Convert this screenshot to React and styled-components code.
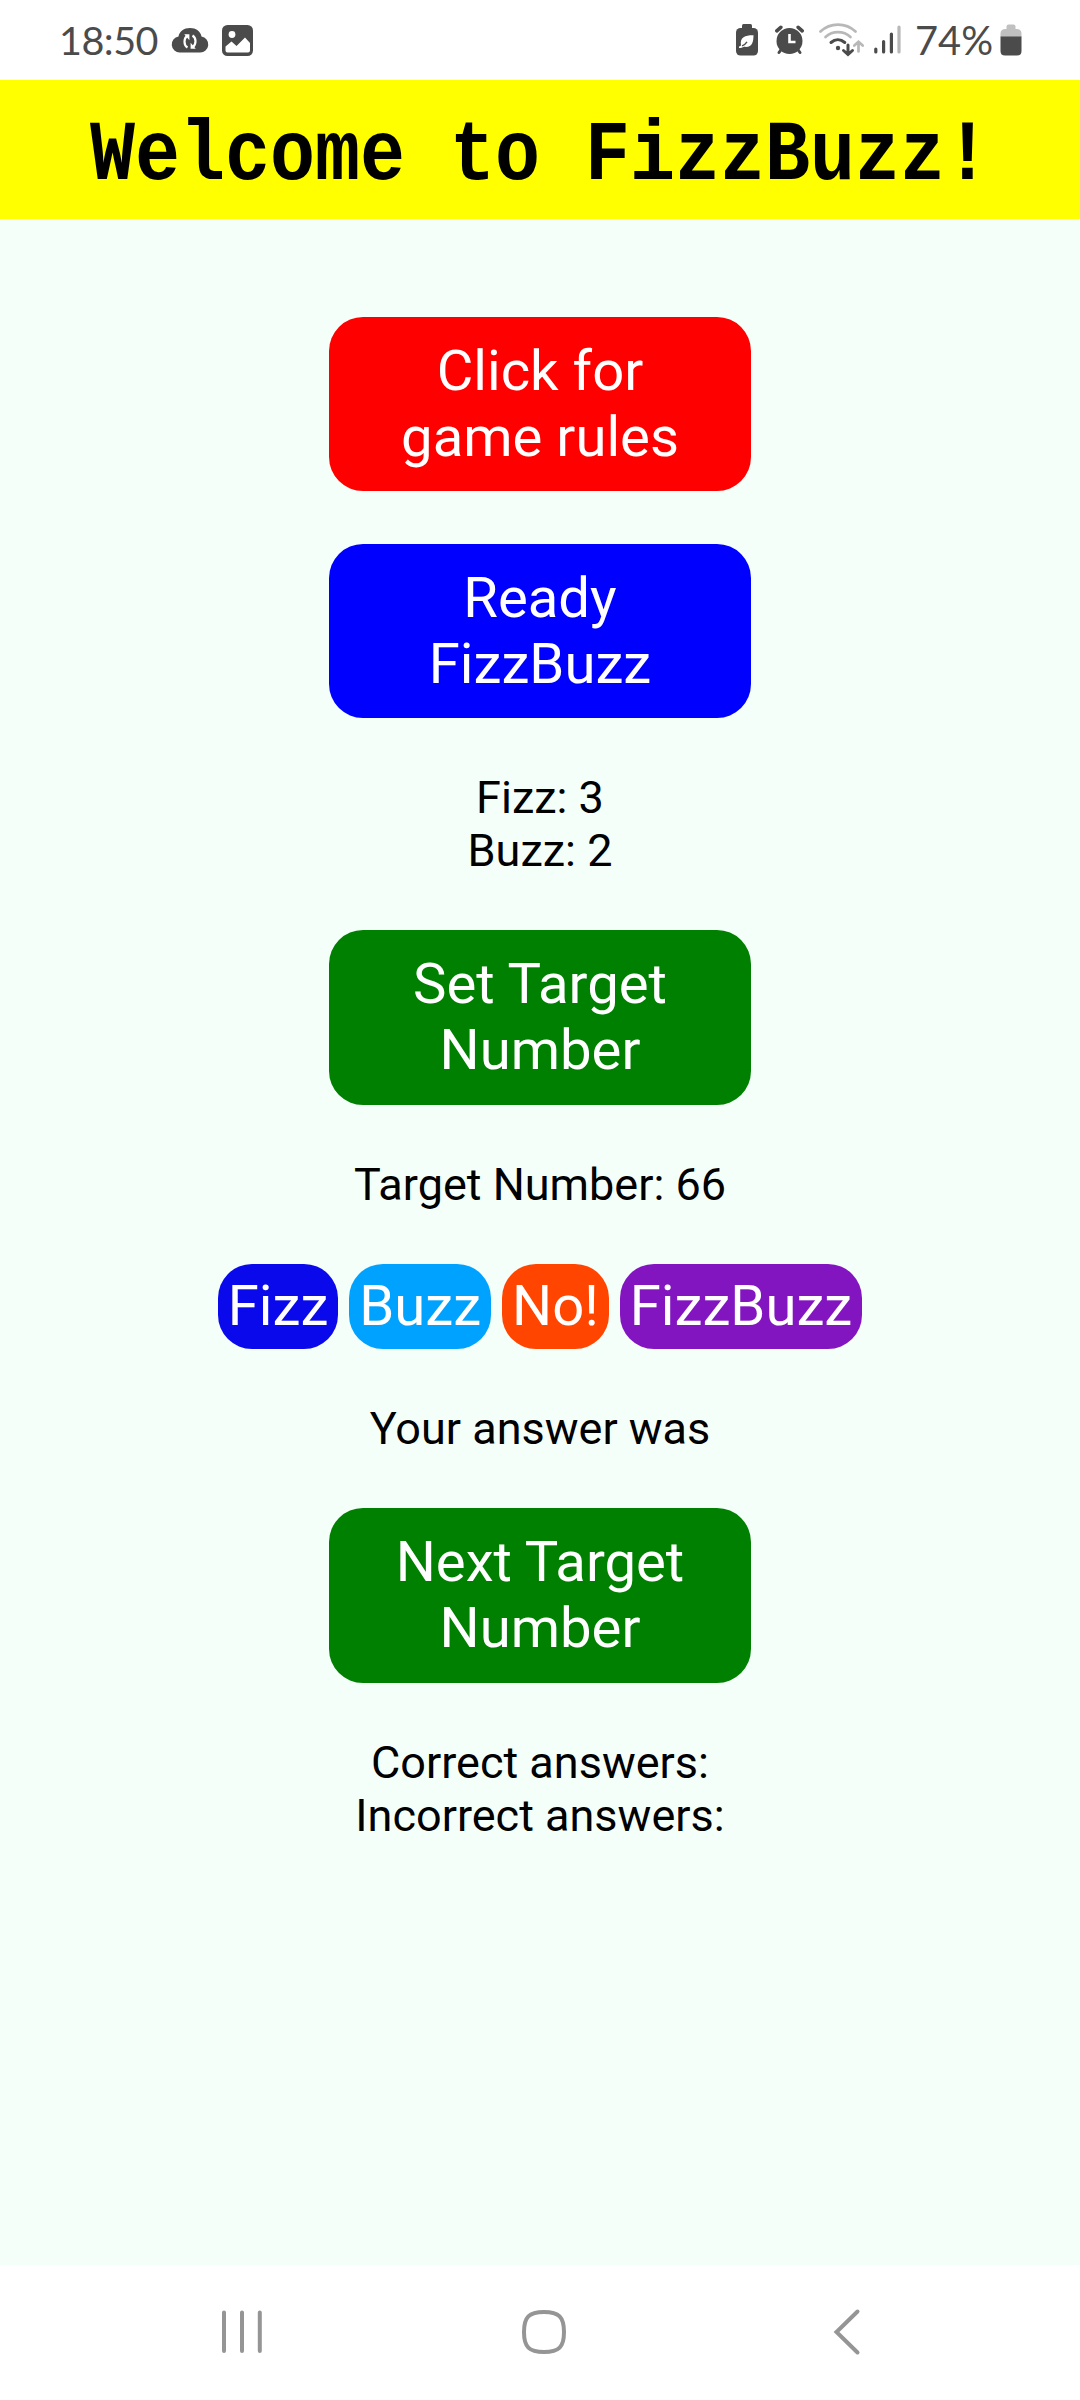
import React from "react";
import styled, { createGlobalStyle } from "styled-components";

const Global = createGlobalStyle`
  html, body { margin: 0; padding: 0; background: #fff; }
  * { box-sizing: border-box; }
`;

const Screen = styled.div`
  width: 1080px;
  height: 2400px;
  display: flex;
  flex-direction: column;
  overflow: hidden;
  font-family: Roboto, "Liberation Sans", sans-serif;
`;

const StatusBar = styled.header`
  height: 80px;
  flex: none;
  display: flex;
  justify-content: space-between;
  padding: 0 58px 0 59px;
  background: #fff;
`;

const StatusGroup = styled.div`
  display: flex;
  align-items: center;
`;

const StatusText = styled.span`
  font-family: Lato, sans-serif;
  font-size: ${(p) => p.$size}px;
  letter-spacing: ${(p) => p.$spacing || 0}px;
  line-height: 80px;
  width: ${(p) => p.$width}px;
  white-space: nowrap;
  color: #4b4b4b;
`;

const Icon = styled.svg`
  display: block;
  flex: none;
  width: ${(p) => p.$w}px;
  height: ${(p) => p.$h || 80}px;
`;

const Banner = styled.div`
  flex: none;
  height: 139px;
  background: #ff0;
  display: flex;
  align-items: center;
  justify-content: center;
`;

const Title = styled.h1`
  margin: 0;
  font-family: "Liberation Mono", monospace;
  font-weight: 700;
  font-size: 75px;
  line-height: 90px;
  white-space: pre;
  color: #000;
  transform: translateY(7px) scaleY(1.14);
`;

const Main = styled.main`
  flex: 1;
  background: #f5fffa;
  display: flex;
  flex-direction: column;
  align-items: center;
  gap: 53px;
  padding-top: 98px;
`;

const WideButton = styled.button`
  width: 422px;
  height: ${(p) => p.$h || 174}px;
  flex: none;
  border: 0;
  border-radius: 34px;
  padding: 0 56px;
  background: ${(p) => p.$bg};
  color: #fff;
  font: 400 56.25px/66px Roboto, sans-serif;
`;

const Info = styled.p`
  margin: 0;
  text-align: center;
  font-size: 45px;
  line-height: 53px;
  color: #000;
`;

const Answers = styled.div`
  display: flex;
  gap: 11.25px;
`;

const Pill = styled.button`
  height: 85px;
  border: 0;
  border-radius: 34px;
  padding: 0 9.85px;
  background: ${(p) => p.$bg};
  color: #fff;
  font: 400 56.25px/66px Roboto, sans-serif;
`;

const NavBar = styled.nav`
  flex: none;
  height: 135px;
  background: #fff;
  display: flex;
  justify-content: space-between;
  padding: 0 216px;
`;

const dark = "#4b4b4b";
const pale = "#b8b8b8";
const grey = "#959595";

const CloudIcon = () => (
  <Icon $w={38} viewBox="0 0 38 80">
    <path d="M9 52.5a8 8 0 0 1-1.500-15.900C8.500 31 13 28 19 28s10.500 3 11.500 8.600A8 8 0 0 1 29 52.500z" fill={dark} />
    <g fill="none" stroke="#fff" strokeWidth="2.200">
      <path d="M16.500 47.500c-4-2.500-4-9 0-12M21.500 35.500c4 2.500 4 9 0 12" />
    </g>
    <path d="M13.200 34.200h5.200v6zM24.800 48.800h-5.200v-6z" fill="#fff" />
  </Icon>
);

const PictureIcon = () => (
  <Icon $w={31} viewBox="0 0 31 80">
    <rect x="0" y="25" width="31" height="31" rx="5.500" fill={dark} />
    <circle cx="10" cy="34.500" r="3.400" fill="#fff" />
    <path d="M3.500 46.500l6-5 5 4.500 8.500-8.500 5 5.500v7.500q0 2-2 2H5.500q-2 0-2-2z" fill="#fff" />
  </Icon>
);

const SaverIcon = () => (
  <Icon $w={22} viewBox="0 0 22 80">
    <rect x="6" y="24" width="10" height="6" rx="1.500" fill={dark} />
    <rect x="0" y="28" width="22" height="27.500" rx="4.500" fill={dark} />
    <path d="M5 45c-1.500-8 5-10 12.500-9.800C17.500 42 16 48 8 46.800c-1.500.8-3 1.200-5 1.200v-1.500c1-.1 2-.8 2-1.500z" fill="#fff" />
    <path d="M6 45.800q3-1 5-4" stroke={dark} strokeWidth="1.400" fill="none" />
  </Icon>
);

const AlarmIcon = () => (
  <Icon $w={29} viewBox="0 0 29 80">
    <g stroke={dark} strokeLinecap="round" strokeWidth="3.600" fill="none">
      <path d="M1.800 30.800l4-3.500M27.200 30.800l-4-3.500" />
      <path d="M6.500 49l-2.500 3.500M22.500 49l2.500 3.500" strokeWidth="3" />
    </g>
    <circle cx="14.500" cy="41" r="13" fill={dark} />
    <path d="M14.500 34v8h6" fill="none" stroke="#fff" strokeWidth="2.600" />
  </Icon>
);

const WifiIcon = () => (
  <Icon $w={46} viewBox="0 0 46 80">
    <g fill="none" strokeLinecap="round" strokeWidth="2.700">
      <path d="M1.500 31.500c9.500-9.300 25.500-9.300 35 0" stroke={pale} />
      <path d="M6.500 37c7-6.400 18-6.400 25 0" stroke={pale} />
      <path d="M12 42.500c4.200-3.700 9.500-3.700 13.800 0" stroke={dark} strokeWidth="3" />
      <path d="M29 45v9M24.500 50.500l4.500 4 4.500-4" stroke={dark} strokeWidth="3" />
      <path d="M39.500 51.500v-9M35.300 45.500l4.200-3.800 4.200 3.800" stroke={pale} />
    </g>
    <circle cx="19" cy="48" r="2.200" fill={dark} />
  </Icon>
);

const SignalIcon = () => (
  <Icon $w={27} viewBox="0 0 27 80">
    <g strokeLinecap="round" strokeWidth="3.200" stroke={dark}>
      <path d="M1.800 49v3M9.600 41.500v10.500M17.400 34v18" />
      <path d="M25 27v25" stroke={pale} />
    </g>
  </Icon>
);

const BatteryIcon = () => (
  <Icon $w={22} viewBox="0 0 22 80">
    <path d="M0.500 37v-3.500q0-4.500 5-4.500h1v-2.500q0-2 2-2h5q2 0 2 2V29h1q5 0 5 4.500V37z" fill="#c0c0c0" />
    <path d="M0.500 36.500h21V51q0 4.500-4.500 4.500H5Q.5 55.500.5 51z" fill={dark} />
  </Icon>
);

const Gap = styled.span`
  flex: none;
  width: ${(p) => p.$w}px;
`;

export default function App() {
  return (
    <>
      <Global />
      <Screen>
        <StatusBar>
          <StatusGroup>
            <StatusText $size={39.5} $spacing={-0.5} $width={112}>18:50</StatusText>
            <CloudIcon />
            <Gap $w={13} />
            <PictureIcon />
          </StatusGroup>
          <StatusGroup>
            <SaverIcon />
            <Gap $w={17} />
            <AlarmIcon />
            <Gap $w={15} />
            <WifiIcon />
            <Gap $w={9} />
            <SignalIcon />
            <Gap $w={14} />
            <StatusText $size={39.8} $width={85}>74%</StatusText>
            <BatteryIcon />
          </StatusGroup>
        </StatusBar>
        <Banner>
          <Title>Welcome to FizzBuzz!</Title>
        </Banner>
        <Main>
          <WideButton $bg="#ff0000">Click for<br />game rules</WideButton>
          <WideButton $bg="#0000ff">Ready<br />FizzBuzz</WideButton>
          <Info>Fizz: 3<br />Buzz: 2</Info>
          <WideButton $bg="#008000" $h={174.8}>Set Target<br />Number</WideButton>
          <Info>Target Number: 66</Info>
          <Answers>
            <Pill $bg="#0909eb">Fizz</Pill>
            <Pill $bg="#00a2ff">Buzz</Pill>
            <Pill $bg="#ff4500">No!</Pill>
            <Pill $bg="#8315c1">FizzBuzz</Pill>
          </Answers>
          <Info>Your answer was</Info>
          <WideButton $bg="#008000" $h={174.8}>Next Target<br />Number</WideButton>
          <Info>Correct answers:<br />Incorrect answers:</Info>
        </Main>
        <NavBar>
          <Icon $w={52} $h={135} viewBox="0 0 52 135">
            <path d="M8 47.500v38.500M26 47.500v38.500M43.800 47.500v38.500" stroke={grey} strokeWidth="4" strokeLinecap="round" />
          </Icon>
          <Icon $w={48} $h={135} viewBox="0 0 48 135">
            <path d="M24 47c-15 0-20 5-20 20s5 20 20 20 20-5 20-20-5-20-20-20z" fill="none" stroke={grey} strokeWidth="4" />
          </Icon>
          <Icon $w={44} $h={135} viewBox="-8.500 0 44 135">
            <path d="M29 46.500L8 67l21 20.500" fill="none" stroke={grey} strokeWidth="4" strokeLinecap="round" />
          </Icon>
        </NavBar>
      </Screen>
    </>
  );
}
